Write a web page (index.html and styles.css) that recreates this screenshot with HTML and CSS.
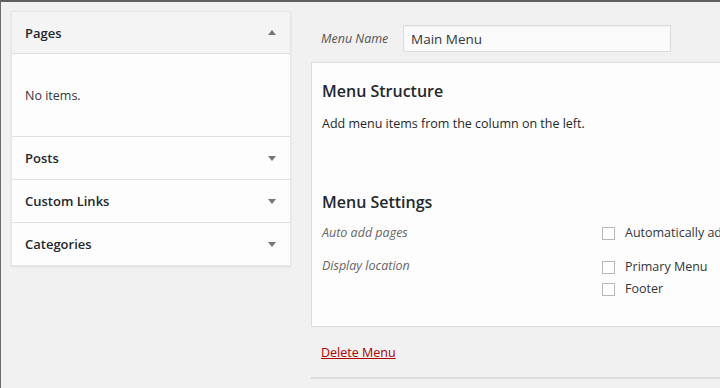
FILE: index.html
```html
<!DOCTYPE html>
<html lang="en">
<head>
  <meta charset="UTF-8">
  <title>Menus</title>
  <link rel="stylesheet" href="styles.css">
</head>
<body>
  <div class="wrap">
    <div class="sidebar">
      <div class="section open">
        <div class="section-head">
          <span>Pages</span>
          <span class="arrow up"></span>
        </div>
        <div class="section-body">No items.</div>
      </div>
      <div class="section">
        <div class="section-head">
          <span>Posts</span>
          <span class="arrow"></span>
        </div>
      </div>
      <div class="section">
        <div class="section-head">
          <span>Custom Links</span>
          <span class="arrow"></span>
        </div>
      </div>
      <div class="section">
        <div class="section-head">
          <span>Categories</span>
          <span class="arrow"></span>
        </div>
      </div>
    </div>

    <div class="menu-edit">
      <div class="menu-header">
        <label for="menu-name">Menu Name</label>
        <input type="text" id="menu-name" value="Main Menu">
      </div>

      <div class="menu-body">
        <h3>Menu Structure</h3>
        <p>Add menu items from the column on the left.</p>

        <h3 class="settings-title">Menu Settings</h3>
        <dl class="setting-row first">
          <dt>Auto add pages</dt>
          <dd>
            <label class="check"><span class="box"></span>Automatically add new top-level pages to this menu</label>
          </dd>
        </dl>
        <dl class="setting-row">
          <dt>Display location</dt>
          <dd>
            <label class="check"><span class="box"></span>Primary Menu</label>
            <label class="check"><span class="box"></span>Footer</label>
          </dd>
        </dl>
      </div>

      <div class="menu-footer">
        <a href="#" class="delete">Delete Menu</a>
      </div>
    </div>
  </div>
</body>
</html>
```

FILE: styles.css
```css
body {
  margin: 0;
  background-color: #f1f1f1;
  border-top: 2px solid #5f5f5f;
  border-left: 1px solid #6a6a6a;
  font-family: 'Open Sans', 'Noto Sans', sans-serif;
  font-size: 12.5px;
  color: #23282d;
  height: 386px;
  overflow: hidden;
}

.wrap {
  display: flex;
  align-items: flex-start;
  gap: 20px;
  padding: 9px 0 0 10px;
}

/* left column */
.sidebar {
  flex: none;
  width: 278px;
  background-color: #fdfdfd;
  border: 1px solid #e5e5e5;
  box-shadow: 0 1px 2px rgba(0, 0, 0, 0.08);
}

.section-head {
  display: flex;
  align-items: center;
  justify-content: space-between;
  height: 42px;
  padding: 0 14px 0 13px;
  border-top: 1px solid #e1e1e1;
  font-size: 13px;
  font-weight: 600;
  color: #23282d;
}

.section:first-child .section-head {
  border-top: none;
  height: 41px;
  background-color: #f4f4f4;
  border-bottom: 1px solid #dfdfdf;
}

.section-body {
  height: 82px;
  display: flex;
  align-items: center;
  padding: 0 13px;
  color: #32373c;
}

.arrow {
  width: 0;
  height: 0;
  border-left: 4px solid transparent;
  border-right: 4px solid transparent;
  border-top: 5px solid #72777c;
}

.arrow.up {
  border-top: none;
  border-bottom: 5px solid #72777c;
}

/* right column */
.menu-edit {
  flex: none;
  width: 600px;
  margin-top: 4px;
}

.menu-header {
  display: flex;
  align-items: center;
  height: 47px;
  padding: 0 10px;
  background-color: #f0f0f0;
  border-bottom: 1px solid #dddddd;
}

.menu-header label {
  font-style: italic;
  color: #555;
  width: 82px;
}

.menu-header input {
  width: 268px;
  height: 27px;
  box-sizing: border-box;
  padding: 0 7px;
  border: 1px solid #dddddd;
  background-color: #fbfbfb;
  font-family: inherit;
  font-size: 13.5px;
  color: #32373c;
  box-shadow: inset 0 1px 2px rgba(0, 0, 0, 0.05);
}

.menu-body {
  background-color: #fdfdfd;
  border-left: 1px solid #dddddd;
  padding: 15px 10px 28px;
}

.menu-body h3 {
  margin: 0;
  font-size: 16px;
  font-weight: 600;
  line-height: 26px;
}

.menu-body p {
  margin: 11px 0 0;
}

.settings-title {
  padding-top: 57px;
}

.setting-row {
  display: flex;
  margin: 0;
}

.setting-row.first {
  margin-top: 9px;
}

.setting-row dt {
  flex: none;
  width: 280px;
  font-style: italic;
  color: #666;
  line-height: 18px;
}

.setting-row dd {
  margin: 0;
  display: flex;
  flex-direction: column;
  gap: 4px;
}

.setting-row + .setting-row {
  margin-top: 15px;
}

.setting-row + .setting-row .check:first-child {
  margin-top: 1px;
}

.check {
  display: flex;
  align-items: center;
  gap: 10px;
  white-space: nowrap;
  color: #32373c;
  line-height: 18px;
}

.box {
  width: 11px;
  height: 11px;
  border: 1px solid #b4b9be;
  background-color: #fff;
  flex: none;
}

.menu-footer {
  height: 50px;
  display: flex;
  align-items: center;
  padding: 0 10px;
  background-color: #f1f1f1;
  border-top: 1px solid #dddddd;
  border-bottom: 2px solid #dddddd;
}

.delete {
  color: #a00;
  text-decoration: underline;
}
```
